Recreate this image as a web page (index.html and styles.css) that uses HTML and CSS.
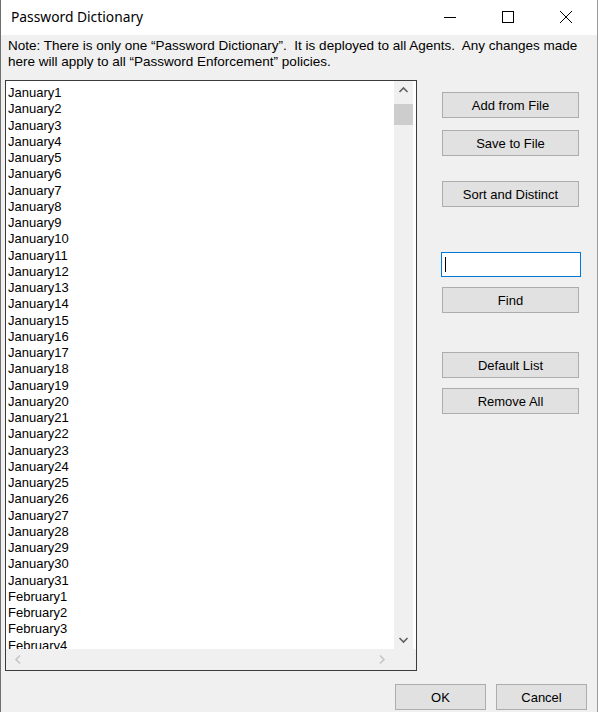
FILE: index.html
```html
<!DOCTYPE html>
<html>
<head>
    <meta charset="utf-8">
    <title>Password Dictionary</title>
    <link rel="stylesheet" href="styles.css">
</head>
<body>
<div class="win">
    <div class="titlebar">
        <span class="title">Password Dictionary</span>
        <div class="caption">
            <span class="cap"><svg width="14" height="14" viewBox="0 0 14 14"><path d="M1 7.5h12" stroke="#000" stroke-width="1"/></svg></span>
            <span class="cap"><svg width="14" height="14" viewBox="0 0 14 14"><rect x="1.5" y="1.5" width="11" height="11" fill="none" stroke="#000" stroke-width="1"/></svg></span>
            <span class="cap"><svg width="14" height="14" viewBox="0 0 14 14"><path d="M1 1L13 13M13 1L1 13" stroke="#000" stroke-width="1"/></svg></span>
        </div>
    </div>
    <div class="body">
        <p class="note">Note: There is only one “Password Dictionary”.&nbsp; It is deployed to all Agents.&nbsp; Any changes made here will apply to all “Password Enforcement” policies.</p>
        <div class="main">
            <div class="listbox">
                <div class="items">
                    <div>January1</div><div>January2</div><div>January3</div><div>January4</div><div>January5</div>
                    <div>January6</div><div>January7</div><div>January8</div><div>January9</div><div>January10</div>
                    <div>January11</div><div>January12</div><div>January13</div><div>January14</div><div>January15</div>
                    <div>January16</div><div>January17</div><div>January18</div><div>January19</div><div>January20</div>
                    <div>January21</div><div>January22</div><div>January23</div><div>January24</div><div>January25</div>
                    <div>January26</div><div>January27</div><div>January28</div><div>January29</div><div>January30</div>
                    <div>January31</div><div>February1</div><div>February2</div><div>February3</div><div>February4</div>
                </div>
                <div class="vscroll">
                    <svg class="arr" width="19" height="18" viewBox="0 0 19 18"><path d="M5.5 11L9.5 7L13.5 11" fill="none" stroke="#606060" stroke-width="1.6"/></svg>
                    <div class="thumb"></div>
                    <div class="track"></div>
                    <svg class="arr" width="19" height="18" viewBox="0 0 19 18"><path d="M5.5 7L9.5 11L13.5 7" fill="none" stroke="#606060" stroke-width="1.6"/></svg>
                </div>
                <div class="hscroll">
                    <svg width="18" height="21" viewBox="0 0 18 21"><path d="M11 6.5L7 10.5L11 14.5" fill="none" stroke="#c6c6c6" stroke-width="1.6"/></svg>
                    <svg width="18" height="21" viewBox="0 0 18 21"><path d="M7 6.5L11 10.5L7 14.5" fill="none" stroke="#c6c6c6" stroke-width="1.6"/></svg>
                </div>
                <div class="corner"></div>
            </div>
            <div class="side">
                <button class="btn">Add from File</button>
                <button class="btn gap-s">Save to File</button>
                <button class="btn gap-m">Sort and Distinct</button>
                <div class="find gap-l"><span class="caret"></span></div>
                <button class="btn gap-xs">Find</button>
                <button class="btn gap-m2">Default List</button>
                <button class="btn gap-xs">Remove All</button>
            </div>
        </div>
        <div class="footer">
            <button class="btn small">OK</button>
            <button class="btn small">Cancel</button>
        </div>
    </div>
</div>
</body>
</html>
```
FILE: styles.css
```css
html, body { margin: 0; padding: 0; background: #f0f0f0; }
body { font-family: "Liberation Sans", Arial, sans-serif; font-size: 13px; color: #000; }
.win { width: 598px; height: 712px; box-sizing: border-box; border-left: 1px solid #6e6e6e; border-right: 1px solid #9a9a9a; overflow: hidden; }
.titlebar { height: 35px; background: #fff; display: flex; align-items: center; justify-content: space-between; }
.title { font-family: "Noto Sans", "Open Sans", sans-serif; font-size: 13.8px; padding-left: 10px; margin-top: -2px; color: #000; }
.caption { display: flex; height: 35px; padding-right: 2px; margin-top: -2px; }
.cap { width: 58px; display: flex; align-items: center; justify-content: center; }
.body { background: #f0f0f0; }
.note { margin: 0; padding: 3px 7px 0 7px; width: 576px; line-height: 16px; height: 42px; font-size: 13.5px; letter-spacing: 0; }
.main { display: flex; padding-left: 4px; }
.listbox { width: 412px; height: 591px; box-sizing: border-box; border: 1px solid #3c3c3c; background: #fff;
    display: grid; grid-template-columns: 388px 22px; grid-template-rows: 568px 21px; }
.items { overflow: hidden; padding: 4px 0 0 2px; line-height: 16.25px; }
.vscroll { display: flex; flex-direction: column; background: #f0f0f0; border-right: 3px solid #fff; }
.arr { display: block; flex: none; }
.thumb { height: 21px; margin: 5px 0 0 0; width: 19px; background: #cdcdcd; }
.track { flex: 1; }
.hscroll { background: #f0f0f0; display: flex; justify-content: space-between; padding: 0 3px 0 3px; }
.corner { background: #f0f0f0; }
.side { display: flex; flex-direction: column; align-items: flex-start; margin-left: 25px; padding-top: 12px; }
.btn { width: 137px; height: 26px; box-sizing: border-box; border: 1px solid #adadad; background: #e1e1e1;
    font-family: "Liberation Sans", Arial, sans-serif; font-size: 13px; color: #000; padding: 0; margin: 0; }
.gap-xs { margin-top: 10px; }
.gap-s { margin-top: 12px; }
.gap-m { margin-top: 25px; }
.gap-m2 { margin-top: 39px; }
.gap-l { margin-top: 45px; }
.find { width: 140px; height: 25px; box-sizing: border-box; border: 1px solid #0078d7; background: #fff; margin-left: -1px; display: flex; align-items: center; padding-left: 3px; }
.caret { width: 1px; height: 15px; background: #000; }
.footer { display: flex; justify-content: flex-end; gap: 10px; padding: 13px 10px 0 0; }
.small { width: 91px; }
```
